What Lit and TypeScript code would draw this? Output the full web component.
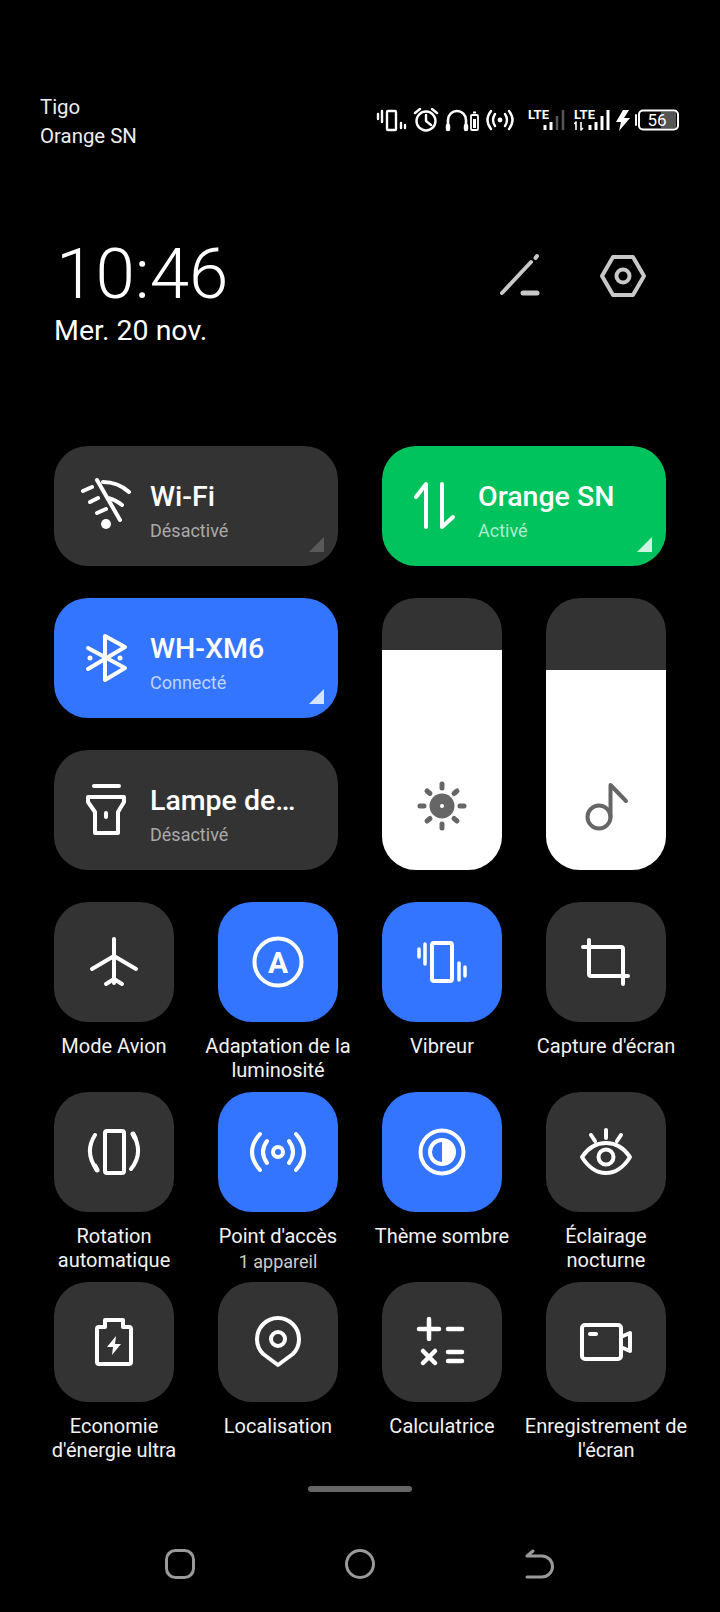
import { LitElement, html, css, svg } from 'lit';
import { customElement } from 'lit/decorators.js';

// 60x60 icons, same box for every tile
const ICONS: Record<string, unknown> = {
  wifiOff: svg`<g transform="translate(0 -2)"><path d="M21 6 44 46M27 8Q42 8 53 18M7 17 16 13M14 28 22 24M32 24Q40 26 46 31M21 39 30 35"/><circle class="f" cx="30" cy="50" r="5"/></g>`,
  data: svg`<path transform="translate(0 -2)" d="M12 23 22 10V53M38 10V53L49 43"/>`,
  bluetooth: svg`<path d="M12 20 49 40 29 52V8L49 19 12 41"/><circle class="f" cx="14" cy="30" r="2.5"/><circle class="f" cx="44" cy="30" r="2.5"/>`,
  torch: svg`<path transform="translate(0 -4)" d="M18 10H43M12 21H48V26L42 36V57H19V36L12 26ZM30 37V41"/>`,
  plane: svg`<path d="M30 7V51M8 37 30 24 52 37M22 52 30 47 38 52"/>`,
  auto: svg`<circle cx="30" cy="30" r="23.5"/><text class="f" x="30" y="40.5" text-anchor="middle" font-size="30" font-weight="700">A</text>`,
  vibrate: svg`<rect x="20" y="11" width="20" height="38" rx="2"/><path stroke-width="3.5" d="M13 12V32M7 17V25M47 31V48M53 35V44"/>`,
  crop: svg`<path d="M13 8V42a2 2 0 0 0 2 2H52M7 15H45a2 2 0 0 1 2 2V52"/>`,
  rotate: svg`<rect x="21" y="9" width="19" height="42" rx="2"/><path d="M11 13C4 24 4 36 13 48M49 12C56 24 56 36 47 47"/><path stroke-width="5" d="M11 44 13 48M49 12 51 16"/>`,
  hotspot: svg`<circle cx="30" cy="30" r="5"/><path d="M12 12Q-4 30 12 48M19 19Q11 30 19 41M48 12Q64 30 48 48M41 19Q49 30 41 41"/>`,
  dark: svg`<circle cx="30" cy="30" r="21.5"/><circle cx="30" cy="30" r="12"/><path class="f" d="M30 18a12 12 0 0 1 0 24Z"/>`,
  eye: svg`<path d="M6 35C12 26 21 21 30 21S48 26 54 35C48 45 39 51 30 51S12 45 6 35ZM30 8V16M15 13 19 19M45 13 41 19"/><circle cx="30" cy="35" r="7.5"/>`,
  battery: svg`<path d="M13 17a2 2 0 0 1 2-2h6V8h18v7h6a2 2 0 0 1 2 2v33a2 2 0 0 1-2 2H15a2 2 0 0 1-2-2Z"/><path class="f" d="M32 24 23 35H29L28 43 37 32H31Z"/>`,
  location: svg`<path d="M30 53 15.2 42A21 21 0 1 1 44.800 42Z"/><circle cx="30" cy="27" r="7"/>`,
  calc: svg`<path stroke-width="4.5" d="M7 17H27M17 7V27M36 17H50M11 39 23 51M23 39 11 51M36 40H50M36 49H50"/>`,
  record: svg`<rect x="6" y="13" width="39" height="34" rx="3"/><path d="M14 22H20M47 24 54 21V39L47 36"/>`,
  sun: svg`<circle class="f" cx="30" cy="30" r="12.500"/><circle fill="#fff" stroke="none" cx="30" cy="30" r="2"/><path stroke-width="5" d="M30 8V12M30 48V52M8 30H12M48 30H52M15 15 18 17.500M45 15 42 17.500M15 45 18 42.500M45 45 42 42.500"/>`,
  note: svg`<circle cx="23" cy="41" r="11.500"/><path d="M34.500 41V9L50 25"/>`,
};

const icon = (name: string) => html`<svg class="icon" viewBox="0 0 60 60">${ICONS[name]}</svg>`;

const small = [
  { icon: 'plane', label: 'Mode Avion' },
  { icon: 'auto', label: 'Adaptation de la\nluminosité', on: true },
  { icon: 'vibrate', label: 'Vibreur', on: true },
  { icon: 'crop', label: "Capture d'écran" },
  { icon: 'rotate', label: 'Rotation\nautomatique' },
  { icon: 'hotspot', label: "Point d'accès", sub: '1 appareil', on: true },
  { icon: 'dark', label: 'Thème sombre', on: true },
  { icon: 'eye', label: 'Éclairage\nnocturne' },
  { icon: 'battery', label: "Economie\nd'énergie ultra" },
  { icon: 'location', label: 'Localisation' },
  { icon: 'calc', label: 'Calculatrice' },
  { icon: 'record', label: "Enregistrement de\nl'écran" },
];

@customElement('app-root')
export class AppRoot extends LitElement {
  static styles = css`
    :host {
      display: block;
      width: 720px;
      height: 1612px;
      overflow: hidden;
      background: #000;
      color: #fff;
      font-family: Roboto, 'Noto Sans', sans-serif;
    }
    .status {
      display: flex;
      justify-content: space-between;
      padding: 93px 40px 0 40px;
      height: 56px;
    }
    .carrier {
      font-size: 20.4px;
      line-height: 29px;
      color: #eee;
    }
    .status-icons {
      width: 310px;
      height: 30px;
      margin: 15px 0 0 0;
      flex: none;
    }
    .head {
      display: flex;
      justify-content: space-between;
      height: 297px;
      box-sizing: border-box;
      padding: 89px 74px 0 54px;
    }
    .time {
      font-size: 71px;
      font-weight: 300;
      line-height: 72px;
      padding-left: 2px;
    }
    .date {
      font-size: 28.5px;
      line-height: 34px;
      margin-top: 4px;
    }
    .head-actions {
      display: flex;
      gap: 60px;
      padding-top: 15px;
    }
    .head-actions svg {
      width: 46px;
      height: 46px;
      fill: none;
      stroke: #c8c8c8;
      stroke-width: 4;
      stroke-linecap: round;
      stroke-linejoin: round;
    }
    .top {
      display: grid;
      grid-template-columns: 284px 284px;
      column-gap: 44px;
      padding: 0 54px;
    }
    .stack {
      display: flex;
      flex-direction: column;
      gap: 32px;
    }
    .wide {
      position: relative;
      display: flex;
      align-items: center;
      height: 120px;
      border-radius: 34px;
      background: #333;
      padding-left: 22px;
      gap: 14px;
      box-sizing: border-box;
    }
    .wide.blue { background: #3375ff; }
    .wide.green { background: #00c35e; }
    .text { padding-top: 11px; }
    .name {
      font-size: 28.5px;
      font-weight: 500;
      line-height: 32px;
    }
    .desc {
      font-size: 18px;
      line-height: 22px;
      margin-top: 7px;
      color: #aaa;
    }
    .blue .desc, .green .desc { color: rgba(255, 255, 255, 0.7); }
    .corner {
      position: absolute;
      right: 14px;
      bottom: 14px;
      width: 15px;
      height: 15px;
      background: #5a5a5a;
      clip-path: polygon(100% 0, 100% 100%, 0 100%);
    }
    .blue .corner, .green .corner { background: rgba(255, 255, 255, 0.8); }
    .sliders {
      display: flex;
      gap: 44px;
    }
    .slider {
      display: flex;
      align-items: flex-end;
      width: 120px;
      height: 272px;
      border-radius: 34px;
      background: #333;
      overflow: hidden;
    }
    .fill {
      display: flex;
      align-items: flex-end;
      justify-content: center;
      width: 100%;
      background: #fff;
      padding-bottom: 34px;
      box-sizing: border-box;
    }
    .fill .icon { stroke: #666; }
    .fill .icon .f { fill: #666; }
    .grid {
      display: grid;
      grid-template-columns: repeat(4, 120px);
      grid-auto-rows: 190px;
      column-gap: 44px;
      padding: 32px 54px 0 54px;
    }
    .cell {
      display: flex;
      flex-direction: column;
      align-items: center;
    }
    .btn {
      display: flex;
      align-items: center;
      justify-content: center;
      flex: none;
      width: 120px;
      height: 120px;
      border-radius: 34px;
      background: #333;
    }
    .btn.on { background: #3375ff; }
    .label {
      flex: none;
      width: 170px;
      margin-top: 12px;
      font-size: 20px;
      line-height: 24px;
      text-align: center;
      color: #f2f2f2;
      white-space: pre-line;
    }
    .sub {
      font-size: 18px;
      line-height: 24px;
      color: #ccc;
      margin-top: 2px;
    }
    .icon {
      width: 60px;
      height: 60px;
      flex: none;
      fill: none;
      stroke: #fff;
      stroke-width: 4;
      stroke-linecap: round;
      stroke-linejoin: round;
      font-family: Roboto, sans-serif;
    }
    .icon .f { fill: #fff; stroke: none; }
    .pill {
      width: 104px;
      height: 6px;
      border-radius: 3px;
      background: #666;
      margin: 14px auto 0 auto;
    }
    .nav {
      display: flex;
      justify-content: center;
      gap: 150px;
      margin-top: 57px;
    }
    .nav svg {
      width: 30px;
      height: 30px;
      fill: none;
      stroke: #9a9a9a;
      stroke-width: 3;
      stroke-linecap: round;
      stroke-linejoin: round;
    }
  `;

  private statusIcons() {
    // drawn in screen px, x starts at 370
    return html`<svg class="status-icons" viewBox="370 108 310 30" fill="none" stroke="#fff" stroke-width="2.400" stroke-linecap="round" stroke-linejoin="round">
      <rect x="387" y="111" width="9" height="19" rx="1"/>
      <path d="M378 114V119M382 111V122M401 123V128M405 125V128"/>
      <circle cx="426" cy="121" r="9.500"/>
      <path d="M426 115V121L431 125M415 113 420 109M432 109 437 113"/>
      <path stroke-width="2.600" d="M448 128V120a9 9 0 0 1 18 0V128"/>
      <path stroke-width="4.500" d="M448 126V129M466 126V129"/>
      <rect x="471" y="115" width="7" height="15" rx="1" stroke-width="1.800"/>
      <rect x="473" y="111.500" width="3" height="2" fill="#fff" stroke="none"/>
      <rect x="473" y="119" width="3" height="9" fill="#fff" stroke="none"/>
      <circle cx="500" cy="120" r="2.400" fill="#fff" stroke="none"/>
      <path d="M491 111Q484 120 491 129M495 114Q491 120 495 126M509 111Q516 120 509 129M505 114Q509 120 505 126"/>
      <text x="528" y="119" font-size="13" font-weight="700" fill="#fff" stroke="none" font-family="Roboto, sans-serif">LTE</text>
      <path stroke-width="3" stroke-linecap="butt" d="M545 125V130M551 122V130"/>
      <path stroke="#555" stroke-width="2.500" stroke-linecap="butt" d="M557 116V130M563 110V130"/>
      <text x="574" y="119" font-size="13" font-weight="700" fill="#fff" stroke="none" font-family="Roboto, sans-serif">LTE</text>
      <path stroke-width="1.600" stroke-linecap="butt" d="M576 130V122L574.500 124M581 122V130L583 128"/>
      <path stroke-width="3" stroke-linecap="butt" d="M590 125V130M596 122V130M602 116V130M608 110V130"/>
      <path fill="#fff" stroke="none" d="M623 110 616 122H621L619 131 630 118H624L629 110Z"/>
      <path stroke-width="2" d="M636 115V125"/>
      <rect x="661" y="112" width="15" height="16" fill="#555" stroke="none"/>
      <rect x="639" y="110.500" width="39" height="19" rx="4" stroke-width="2"/>
      <text x="657" y="126" font-size="17" text-anchor="middle" fill="#fff" stroke="none" font-family="Roboto, sans-serif">56</text>
    </svg>`;
  }

  private wide(iconName: string, name: string, desc: string, cls = '', corner = true) {
    return html`<div class="wide ${cls}">
      ${icon(iconName)}
      <div class="text"><div class="name">${name}</div><div class="desc">${desc}</div></div>
      ${corner ? html`<div class="corner"></div>` : ''}
    </div>`;
  }

  private slider(iconName: string, fill: number) {
    return html`<div class="slider">
      <div class="fill" style="height:${fill}px">${icon(iconName)}</div>
    </div>`;
  }

  render() {
    return html`
      <div class="status">
        <div class="carrier">Tigo<br />Orange SN</div>
        ${this.statusIcons()}
      </div>
      <div class="head">
        <div>
          <div class="time">10:46</div>
          <div class="date">Mer. 20 nov.</div>
        </div>
        <div class="head-actions">
          <svg viewBox="0 0 46 46"><path d="M8 40 37 9M41.500 5 43 3"/><path stroke-width="5" d="M29 40H43"/></svg>
          <svg viewBox="0 0 46 46"><path d="M13 4H33L44 23 33 42H13L2 23Z"/><circle cx="23" cy="23" r="6.500"/></svg>
        </div>
      </div>
      <div class="top">
        <div class="stack">
          ${this.wide('wifiOff', 'Wi-Fi', 'Désactivé')}
          ${this.wide('bluetooth', 'WH-XM6', 'Connecté', 'blue')}
          ${this.wide('torch', 'Lampe de…', 'Désactivé', '', false)}
        </div>
        <div class="stack">
          ${this.wide('data', 'Orange SN', 'Activé', 'green')}
          <div class="sliders">
            ${this.slider('sun', 220)}
            ${this.slider('note', 200)}
          </div>
        </div>
      </div>
      <div class="grid">
        ${small.map(
          (t) => html`<div class="cell">
            <div class="btn ${t.on ? 'on' : ''}">${icon(t.icon)}</div>
            <div class="label">${t.label}${t.sub ? html`<div class="sub">${t.sub}</div>` : ''}</div>
          </div>`
        )}
      </div>
      <div class="pill"></div>
      <div class="nav">
        <svg viewBox="0 0 30 30"><rect x="1.500" y="1.500" width="27" height="27" rx="9"/></svg>
        <svg viewBox="0 0 30 30"><circle cx="15" cy="15" r="13.500"/></svg>
        <svg viewBox="0 0 30 30"><path d="M2 7H17a10.500 10.500 0 0 1 0 21H2M8 2 2 7"/></svg>
      </div>
    `;
  }
}
